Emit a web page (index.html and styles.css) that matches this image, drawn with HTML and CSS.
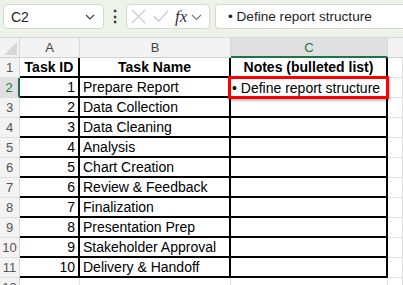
FILE: index.html
```html
<!DOCTYPE html>
<html>
<head>
<meta charset="utf-8">
<link rel="stylesheet" href="styles.css">
</head>
<body>
<div class="toolbar">
  <div class="namebox"><span class="ref">C2</span><svg class="chev" width="12" height="8" viewBox="0 0 12 8"><path d="M2 2 L6 6 L10 2" fill="none" stroke="#444" stroke-width="1.2"/></svg></div>
  <div class="dots">⋮</div>
  <div class="fxbox">
    <svg class="ico-x" width="15" height="15" viewBox="0 0 16 16"><path d="M1 1 L15 15 M15 1 L1 15" stroke="#c4c4c4" stroke-width="1.2"/></svg>
    <svg class="ico-ok" width="16" height="13" viewBox="0 0 17 14"><path d="M1 7 L6 12 L16 1" fill="none" stroke="#c4c4c4" stroke-width="1.2"/></svg>
    <span class="fx">fx</span>
    <svg width="11" height="8" viewBox="0 0 11 8"><path d="M1 2 L5.5 6.5 L10 2" fill="none" stroke="#777" stroke-width="1.1"/></svg>
  </div>
  <div class="formula">• Define report structure</div>
</div>
<div class="sheet">
  <div class="corner"><svg width="20" height="20" viewBox="0 0 20 20"><path d="M17 4 L17 17 L4 17 Z" fill="#d6d6d6"/></svg></div>
  <div class="ch">A</div>
  <div class="ch">B</div>
  <div class="ch sel">C</div>
  <div class="ch last"></div>

  <div class="rh">1</div>
  <div class="c b h">Task ID</div>
  <div class="c b h">Task Name</div>
  <div class="c b h">Notes (bulleted list)</div>
  <div class="c g"></div>

  <div class="rh act">2</div>
  <div class="c b n">1</div>
  <div class="c b">Prepare Report</div>
  <div class="c b active"><div class="selbox">• Define report structure</div></div>
  <div class="c g"></div>

  <div class="rh">3</div>
  <div class="c b n">2</div>
  <div class="c b">Data Collection</div>
  <div class="c b"></div>
  <div class="c g"></div>

  <div class="rh">4</div>
  <div class="c b n">3</div>
  <div class="c b">Data Cleaning</div>
  <div class="c b"></div>
  <div class="c g"></div>

  <div class="rh">5</div>
  <div class="c b n">4</div>
  <div class="c b">Analysis</div>
  <div class="c b"></div>
  <div class="c g"></div>

  <div class="rh">6</div>
  <div class="c b n">5</div>
  <div class="c b">Chart Creation</div>
  <div class="c b"></div>
  <div class="c g"></div>

  <div class="rh">7</div>
  <div class="c b n">6</div>
  <div class="c b">Review &amp; Feedback</div>
  <div class="c b"></div>
  <div class="c g"></div>

  <div class="rh">8</div>
  <div class="c b n">7</div>
  <div class="c b">Finalization</div>
  <div class="c b"></div>
  <div class="c g"></div>

  <div class="rh">9</div>
  <div class="c b n">8</div>
  <div class="c b">Presentation Prep</div>
  <div class="c b"></div>
  <div class="c g"></div>

  <div class="rh">10</div>
  <div class="c b n">9</div>
  <div class="c b">Stakeholder Approval</div>
  <div class="c b"></div>
  <div class="c g"></div>

  <div class="rh">11</div>
  <div class="c b n">10</div>
  <div class="c b">Delivery &amp; Handoff</div>
  <div class="c b"></div>
  <div class="c g"></div>

  <div class="rh">12</div>
  <div class="c g"></div>
  <div class="c g"></div>
  <div class="c g"></div>
  <div class="c g"></div>
</div>
</body>
</html>
```
FILE: styles.css
```css
* { box-sizing: border-box; }
html, body { margin: 0; padding: 0; }
body {
  width: 403px; height: 285px; overflow: hidden;
  font-family: "Liberation Sans", Arial, sans-serif;
  background: #fff;
}
.toolbar {
  height: 37px;
  background: #eef3e9;
  display: flex;
  align-items: flex-start;
  padding: 4px 0 0 3px;
}
.namebox {
  width: 101px; height: 25px;
  background: #fff;
  border: 1px solid #d4d8d0;
  border-radius: 4px;
  display: flex; align-items: center; justify-content: space-between;
  padding: 0 7px 0 7px;
  font-size: 14px; color: #1e1e1e;
}
.dots {
  width: 22px; text-align: center;
  font-size: 16px; line-height: 25px; color: #333; font-weight: bold;
}
.fxbox {
  width: 84px; height: 25px;
  background: #fff;
  border: 1px solid #d4d8d0;
  border-radius: 4px;
  display: flex; align-items: center;
  padding: 0 2px 0 4px;
}
.ico-ok { margin-left: 7px; }
.fx {
  font-family: "Liberation Serif", serif; font-style: italic;
  font-size: 17px; color: #333; margin-left: 6px; margin-right: 4px;
}
.formula {
  margin-left: 5px;
  flex: 1; height: 25px;
  background: #fff;
  border: 1px solid #d4d8d0; border-right: none;
  border-radius: 4px 0 0 4px;
  padding-left: 12px;
  font-size: 13.6px; line-height: 23px; color: #1e1e1e;
}
.sheet {
  display: grid;
  grid-template-columns: 20px 60px 151px 157px 15px;
  grid-template-rows: repeat(13, 20px);
  border-top: 1px solid #d8d8d8;
}
.corner { background: #f3f3f3; border-right: 1px solid #d8d8d8; border-bottom: 1px solid #d0d0d0; }
.ch {
  background: #f3f3f3;
  border-right: 1px solid #d8d8d8;
  border-bottom: 1px solid #d0d0d0;
  text-align: center; font-size: 13px; line-height: 19px; color: #444;
}
.ch.sel { background: #e0e0e0; color: #217346; border-bottom: 2px solid #217346; }
.ch.last { border-right: none; }
.rh {
  background: #f3f3f3;
  border-right: 1px solid #d8d8d8;
  border-bottom: 1px solid #e0e0e0;
  text-align: center; font-size: 13px; line-height: 20px; color: #555;
}
.rh.act { color: #217346; background: #e0e0e0; border-right: 2px solid #217346; }
.c {
  font-size: 14px; line-height: 19px; padding: 0 3px;
  white-space: nowrap; color: #000;
}
.c.g { border-right: 1px solid #e1e1e1; border-bottom: 1px solid #e1e1e1; }
.c.b { border-right: 2px solid #000; border-bottom: 2px solid #000; }
.c.h { font-weight: bold; text-align: center; }
.c.n { text-align: right; }
.active { position: relative; }
.selbox {
  position: absolute; left: -3px; top: -2px; right: -3px; bottom: -3px;
  border: 3px solid #ff0000;
  padding-left: 1px; line-height: 18px;
  box-shadow: 1px 2px 2px rgba(0,0,0,0.25);
}
```
